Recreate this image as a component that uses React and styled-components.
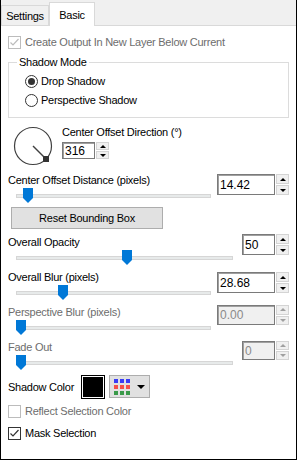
import styled, { createGlobalStyle } from 'styled-components';

const GlobalStyle = createGlobalStyle`
  html, body {
    margin: 0;
    padding: 0;
    background: #fff;
  }
  body {
    font-family: "Liberation Sans", Arial, sans-serif;
    font-size: 11px;
    letter-spacing: -0.25px;
    color: #000;
  }
  * {
    box-sizing: border-box;
  }
`;

const Window = styled.div`
  width: 297px;
  height: 460px;
  display: flex;
  flex-direction: column;
  border: 1px solid #000;
  border-top: none;
  background: #fff;
  overflow: hidden;
`;

const TabStrip = styled.div`
  display: flex;
  align-items: flex-end;
  height: 26px;
  flex-shrink: 0;
  background: #f0f0f0;
  border-bottom: 1px solid #d9d9d9;
`;

const Tab = styled.div`
  position: relative;
  z-index: ${(p) => (p.$active ? 1 : 0)};
  width: ${(p) => (p.$active ? 46 : 48)}px;
  height: ${(p) => (p.$active ? 24 : 20)}px;
  margin-bottom: ${(p) => (p.$active ? -1 : 0)}px;
  padding-top: ${(p) => (p.$active ? 3 : 1)}px;
  line-height: 18px;
  text-align: center;
  background: ${(p) => (p.$active ? '#fff' : '#f0f0f0')};
  border: 1px solid #d9d9d9;
  border-bottom: none;
`;

const Body = styled.div`
  flex: 1;
  display: flex;
  flex-direction: column;
  padding: 0 7px;
`;

const CheckRow = styled.div`
  display: flex;
  align-items: center;
  gap: 4px;
  height: 14px;
  line-height: 14px;
  margin-top: ${(p) => p.$mt}px;
  color: ${(p) => (p.$disabled ? '#6d6d6d' : '#000')};
`;

const CheckBox = styled.span`
  display: flex;
  width: 13px;
  height: 13px;
  background: #fff;
  border: 1px solid ${(p) => (p.$disabled ? '#bcbcbc' : '#333')};
`;

const Group = styled.fieldset`
  margin: ${(p) => p.$mt}px 0 0;
  padding: 0 0 7px;
  min-width: 0;
  border: 1px solid #dcdcdc;
`;

const Legend = styled.legend`
  margin-left: 8px;
  padding: 0 2px;
  line-height: 14px;
`;

const RadioList = styled.div`
  display: flex;
  flex-direction: column;
  padding: 3px 0 0 16px;
`;

const RadioRow = styled.div`
  display: flex;
  align-items: center;
  gap: 3px;
  height: 19px;
  line-height: 19px;
`;

const RadioCircle = styled.span`
  display: flex;
  align-items: center;
  justify-content: center;
  width: 13px;
  height: 13px;
  border: 1px solid #333;
  border-radius: 50%;
  background: #fff;

  &::after {
    content: '';
    display: ${(p) => (p.$checked ? 'block' : 'none')};
    width: 7px;
    height: 7px;
    border-radius: 50%;
    background: #333;
  }
`;

const DialRow = styled.div`
  display: flex;
  height: 41px;
  margin-top: ${(p) => p.$mt}px;
`;

const Dial = styled.svg`
  width: 40px;
  height: 40px;
  margin: 1px 0 0 5px;
`;

const DialBlock = styled.div`
  display: flex;
  flex-direction: column;
  align-items: flex-start;
  margin-left: 9px;
`;

const ParamRow = styled.div`
  display: flex;
  justify-content: space-between;
  align-items: flex-start;
  margin-top: ${(p) => p.$mt}px;
`;

const ParamMain = styled.div`
  display: flex;
  flex-direction: column;
`;

const Label = styled.div`
  height: 15px;
  line-height: 15px;
  white-space: nowrap;
  color: ${(p) => (p.$disabled ? '#6d6d6d' : '#000')};
`;

const SliderBody = styled.div`
  position: relative;
  width: ${(p) => p.$w}px;
  height: 16px;
  margin-left: 8px;
`;

const Track = styled.div`
  position: absolute;
  left: 0;
  right: 0;
  top: 6px;
  height: 4px;
  background: #e7eaea;
  border: 1px solid #d6d6d6;
`;

const Thumb = styled.svg`
  position: absolute;
  top: 0;
  width: 10px;
  height: 15px;
`;

const SpinWrap = styled.div`
  display: flex;
  gap: 1px;
  margin-top: ${(p) => p.$mt || 0}px;
`;

const NumBox = styled.div`
  display: flex;
  align-items: center;
  width: ${(p) => p.$w}px;
  height: ${(p) => p.$h}px;
  padding-left: 2px;
  font-size: 12px;
  letter-spacing: 0;
  color: ${(p) => (p.$disabled ? '#8a8a8a' : '#000')};
  background: ${(p) => (p.$disabled ? '#f0f0f0' : '#fff')};
  border: 1px solid #7a7a7a;
  box-shadow: inset 1px 1px 0 #a0a0a0;
`;

const SpinButtons = styled.div`
  display: flex;
  flex-direction: column;
  gap: 1px;
  width: 13px;
`;

const SpinButton = styled.div`
  flex: 1;
  display: flex;
  align-items: center;
  justify-content: center;
  background: #f0f0f0;
  border: 1px solid #d4d4d4;
`;

const Arrow = styled.span`
  width: 0;
  height: 0;
  border-left: 3px solid transparent;
  border-right: 3px solid transparent;
  ${(p) => (p.$down ? 'border-top' : 'border-bottom')}: 3px solid ${(p) => (p.$disabled ? '#a0a0a0' : '#000')};
`;

const ResetButton = styled.button`
  align-self: flex-start;
  width: 152px;
  height: 22px;
  margin: 3px 0 0 3px;
  padding: 0;
  font: inherit;
  letter-spacing: inherit;
  color: #000;
  background: #e1e1e1;
  border: 1px solid #adadad;
`;

const ColorRow = styled.div`
  display: flex;
  align-items: center;
  height: 24px;
  margin-top: ${(p) => p.$mt}px;
`;

const ColorLabel = styled.span`
  width: 73px;
  white-space: nowrap;
`;

const Swatch = styled.div`
  width: 24px;
  height: 24px;
  background: ${(p) => p.$color};
  border: 1px solid #000;
  box-shadow: inset 0 0 0 1px #fff;
`;

const PickerButton = styled.div`
  display: flex;
  align-items: center;
  gap: 7px;
  width: 41px;
  height: 23px;
  margin-left: 4px;
  padding-left: 4px;
  align-self: flex-start;
  background: #e1e1e1;
  border: 1px solid #adadad;
`;

const DropArrow = styled.span`
  width: 0;
  height: 0;
  border-left: 4px solid transparent;
  border-right: 4px solid transparent;
  border-top: 4px solid #000;
`;

function Check({ checked, disabled }) {
  return (
    <CheckBox $disabled={disabled}>
      {checked && (
        <svg width="11" height="11" viewBox="0 0 11 11">
          <path
            d="M1.5 5.5 L4 8 L9.5 2"
            fill="none"
            stroke={disabled ? '#bcbcbc' : '#333'}
            strokeWidth="1.2"
          />
        </svg>
      )}
    </CheckBox>
  );
}

function SpinField({ value, w, h, mt, disabled }) {
  return (
    <SpinWrap $mt={mt}>
      <NumBox $w={w} $h={h} $disabled={disabled}>
        {value}
      </NumBox>
      <SpinButtons>
        <SpinButton>
          <Arrow $disabled={disabled} />
        </SpinButton>
        <SpinButton>
          <Arrow $down $disabled={disabled} />
        </SpinButton>
      </SpinButtons>
    </SpinWrap>
  );
}

function Slider({ width, pos }) {
  return (
    <SliderBody $w={width}>
      <Track />
      <Thumb viewBox="0 0 10 15" style={{ left: Math.round(pos * (width - 10)) }}>
        <path d="M0 0 H10 V10 L5 15 L0 10 Z" fill="#0078d7" />
      </Thumb>
    </SliderBody>
  );
}

const params = [
  { label: 'Center Offset Distance (pixels)', value: '14.42', pos: 0.036, wide: false, mt: 7, boxMt: 1, h: 21 },
  { label: 'Overall Opacity', value: '50', pos: 0.51, wide: true, mt: 6, boxMt: -1, h: 21 },
  { label: 'Overall Blur (pixels)', value: '28.68', pos: 0.227, wide: false, mt: 4, boxMt: 2, h: 21 },
  { label: 'Perspective Blur (pixels)', value: '0.00', pos: 0, wide: false, mt: 4, boxMt: 0, h: 20, disabled: true },
  { label: 'Fade Out', value: '0', pos: 0, wide: true, mt: 4, boxMt: 1, h: 19, disabled: true },
];

function Param({ p }) {
  return (
    <ParamRow $mt={p.mt}>
      <ParamMain>
        <Label $disabled={p.disabled}>{p.label}</Label>
        <Slider width={p.wide ? 217 : 195} pos={p.pos} />
      </ParamMain>
      <SpinField value={p.value} w={p.wide ? 33 : 58} h={p.h} mt={p.boxMt} disabled={p.disabled} />
    </ParamRow>
  );
}

const gridColors = ['#3a3cf5', '#f5504a', '#3a9a4a'];

function App() {
  const [distance, opacity, blur, perspective, fade] = params;
  return (
    <>
      <GlobalStyle />
      <Window>
        <TabStrip>
          <Tab>Settings</Tab>
          <Tab $active>Basic</Tab>
        </TabStrip>
        <Body>
          <CheckRow $mt={9} $disabled>
            <Check checked disabled />
            Create Output In New Layer Below Current
          </CheckRow>

          <Group $mt={6}>
            <Legend>Shadow Mode</Legend>
            <RadioList>
              <RadioRow>
                <RadioCircle $checked />
                Drop Shadow
              </RadioRow>
              <RadioRow>
                <RadioCircle />
                Perspective Shadow
              </RadioRow>
            </RadioList>
          </Group>

          <DialRow $mt={7}>
            <Dial viewBox="0 0 40 40">
              <circle cx="20" cy="20" r="18.5" fill="none" stroke="#404040" strokeWidth="1.2" />
              <line x1="20" y1="20" x2="33" y2="33" stroke="#404040" strokeWidth="1.4" />
              <rect x="30" y="30" width="6" height="6" fill="#333" />
            </Dial>
            <DialBlock>
              <Label>Center Offset Direction (°)</Label>
              <SpinField value="316" w={33} h={17} mt={2} />
            </DialBlock>
          </DialRow>

          <Param p={distance} />
          <ResetButton>Reset Bounding Box</ResetButton>
          <Param p={opacity} />
          <Param p={blur} />
          <Param p={perspective} />
          <Param p={fade} />

          <ColorRow $mt={4}>
            <ColorLabel>Shadow Color</ColorLabel>
            <Swatch $color="#000" />
            <PickerButton>
              <svg width="16" height="16" viewBox="0 0 16 16">
                {gridColors.map((c, row) =>
                  [0, 6, 12].map((x) => (
                    <rect key={`${row}-${x}`} x={x} y={row * 6} width="4" height="4" fill={c} />
                  ))
                )}
              </svg>
              <DropArrow />
            </PickerButton>
          </ColorRow>

          <CheckRow $mt={5} $disabled>
            <Check disabled />
            Reflect Selection Color
          </CheckRow>
          <CheckRow $mt={8}>
            <Check checked />
            Mask Selection
          </CheckRow>
        </Body>
      </Window>
    </>
  );
}

export default App;
